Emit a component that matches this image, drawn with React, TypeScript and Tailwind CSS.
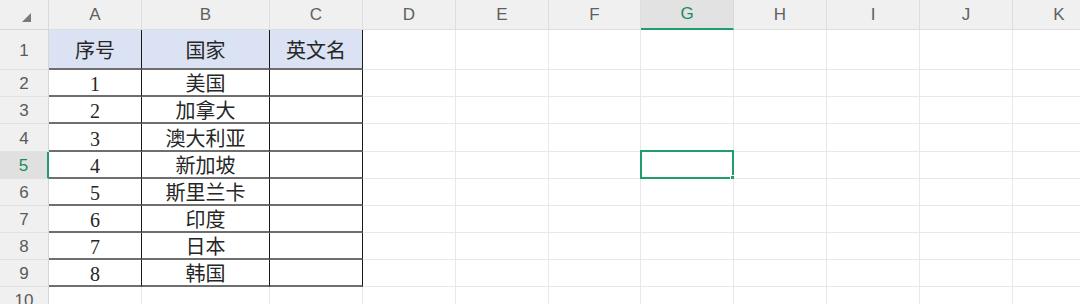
import React from "react";

const COLS = ["A", "B", "C", "D", "E", "F", "G", "H", "I", "J", "K"];
const ROW_COUNT = 10;
const data: string[][] = [
  ["序号", "国家", "英文名"],
  ["1", "美国", ""],
  ["2", "加拿大", ""],
  ["3", "澳大利亚", ""],
  ["4", "新加坡", ""],
  ["5", "斯里兰卡", ""],
  ["6", "印度", ""],
  ["7", "日本", ""],
  ["8", "韩国", ""],
];

const serif = { fontFamily: '"Liberation Serif", "Noto Sans CJK SC", serif' };
const sans = { fontFamily: '"Liberation Sans", Arial, sans-serif' };

export default function App() {
  const cells: React.ReactNode[] = [];

  cells.push(
    <div key="corner" className="relative bg-[#f0f0f0] border-r border-b border-[#d9d9d9]">
      <svg className="absolute left-[22px] top-[13px]" width="9" height="9" viewBox="0 0 9 9">
        <polygon points="9,0 9,9 0,9" fill="#7a7a7a" />
      </svg>
    </div>
  );
  COLS.forEach((c) => {
    const sel = c === "G";
    cells.push(
      <div
        key={"h" + c}
        style={sans}
        className={
          "flex items-center justify-center text-[17px] " +
          (sel
            ? "bg-[#e2e2e2] text-[#1b8a5a] border-b-2 border-b-[#1f9d6b] border-r border-r-[#d9d9d9]"
            : "bg-[#f0f0f0] text-[#606060] border-r border-b border-[#dedede]")
        }
      >
        {c}
      </div>
    );
  });

  for (let r = 1; r <= ROW_COUNT; r++) {
    const selRow = r === 5;
    cells.push(
      <div
        key={"r" + r}
        style={sans}
        className={
          "flex items-center justify-center text-[17px] pt-[2px] border-b border-b-[#e2e2e2] " +
          (selRow
            ? "bg-[#e0e0e0] text-[#1b8a5a] border-r-2 border-r-[#1f9d6b]"
            : "bg-[#f0f0f0] text-[#5a5a5a] border-r border-r-[#d6d6d6]")
        }
      >
        {r}
      </div>
    );
    COLS.forEach((c, ci) => {
      const inTable = r <= 9 && ci <= 2;
      const text = inTable ? data[r - 1][ci] : "";
      const isSel = c === "G" && r === 5;
      let cls = "relative flex items-center justify-center text-[20px] leading-none pt-[3px] text-[#262626] ";
      if (inTable) {
        cls += "border-r border-r-[#1a1a1a] border-b-2 border-b-[#6e6e6e] ";
        cls += r === 1 ? "bg-[#dae2f3]" : "bg-white";
      } else {
        cls += "bg-white border-r border-b border-[#e8e8e8]";
      }
      cells.push(
        <div key={c + r} style={serif} className={cls}>
          {text}
          {isSel && (
            <div className="absolute left-[-1px] top-[-2px] right-[-1px] bottom-[-1px] border-2 border-[#1f9d6b]">
              <div className="absolute right-[-4px] bottom-[-4px] w-[6px] h-[6px] bg-[#1f9d6b] border border-white" />
            </div>
          )}
        </div>
      );
    });
  }

  return (
    <div className="w-[1080px] h-[304px] overflow-hidden bg-white">
      <div className="grid grid-cols-[49px_93px_128px_93px_93px_93px_92px_93px_93px_93px_93px_93px] grid-rows-[30px_40px_27px_27px_28px_27px_27px_27px_27px_27px_27px] w-[1106px]">
        {cells}
      </div>
    </div>
  );
}
